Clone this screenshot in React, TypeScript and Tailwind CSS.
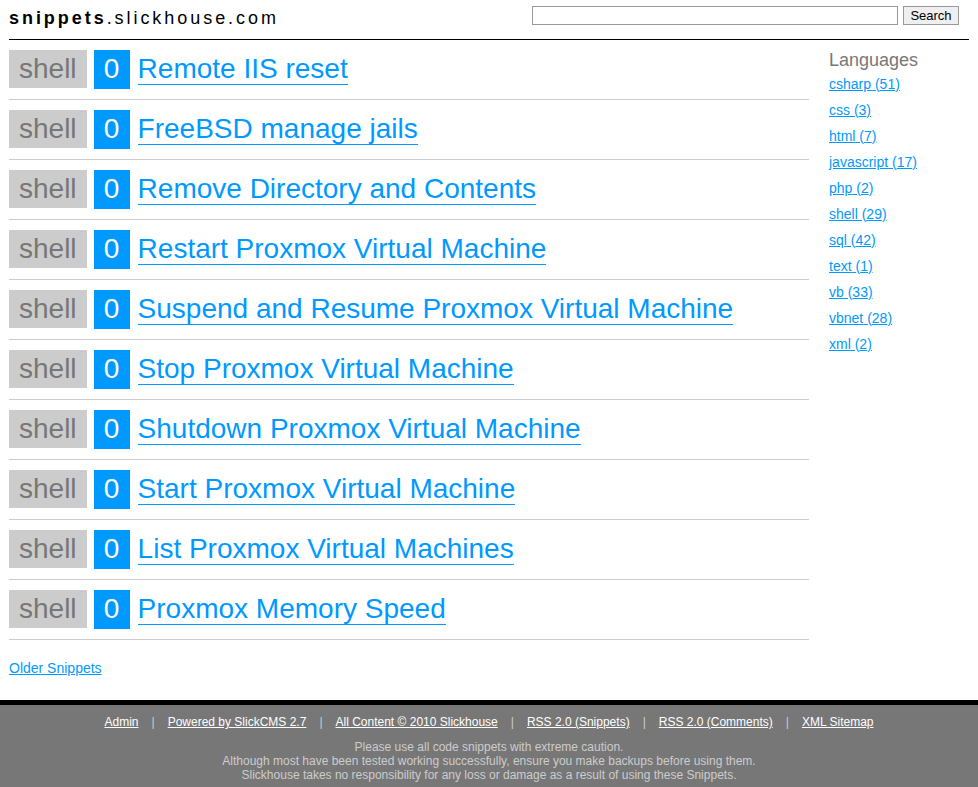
const SNIPPETS = [
  "Remote IIS reset",
  "FreeBSD manage jails",
  "Remove Directory and Contents",
  "Restart Proxmox Virtual Machine",
  "Suspend and Resume Proxmox Virtual Machine",
  "Stop Proxmox Virtual Machine",
  "Shutdown Proxmox Virtual Machine",
  "Start Proxmox Virtual Machine",
  "List Proxmox Virtual Machines",
  "Proxmox Memory Speed",
];

const LANGUAGES = [
  ["csharp", 51],
  ["css", 3],
  ["html", 7],
  ["javascript", 17],
  ["php", 2],
  ["shell", 29],
  ["sql", 42],
  ["text", 1],
  ["vb", 33],
  ["vbnet", 28],
  ["xml", 2],
] as const;

const FOOTER_LINKS = [
  "Admin",
  "Powered by SlickCMS 2.7",
  "All Content © 2010 Slickhouse",
  "RSS 2.0 (Snippets)",
  "RSS 2.0 (Comments)",
  "XML Sitemap",
];

export default function App() {
  return (
    <div className="min-h-screen bg-white font-['Liberation_Sans',Arial,sans-serif] text-black">
      <div className="ml-[9px] w-[960px]">
        <header className="flex h-[40px] items-start justify-between border-b border-black">
          <h1 className="pt-[8px] text-[18px] leading-[20px] tracking-[2.95px]">
            <span className="font-bold">snippets</span>.slickhouse.com
          </h1>
          <form className="mr-[10px] mt-[6px] flex gap-[5px]">
            <input
              type="text"
              className="h-[19px] w-[366px] border border-[#999] bg-white px-1 text-[13px] outline-none"
            />
            <button
              type="button"
              className="h-[19px] w-[56px] border border-[#999] bg-[#efefef] text-[13px] leading-[17px] text-black"
            >
              Search
            </button>
          </form>
        </header>

        <div className="flex">
          <main className="w-[800px]">
            <ul>
              {SNIPPETS.map((title) => (
                <li
                  key={title}
                  className="flex items-start border-b border-[#ccc] py-[10px]"
                >
                  <span className="h-[38px] bg-[#ccc] px-[10px] text-[28px] leading-[37px] text-[#777]">
                    shell
                  </span>
                  <span className="ml-[7px] h-[39px] w-[36px] bg-[#0099ff] text-center text-[28px] leading-[37px] text-white">
                    0
                  </span>
                  <span className="ml-[8px] text-[28px] leading-[37px]">
                    <a
                      href="#"
                      className="border-b border-[#0099ff] text-[#0099ff]"
                    >
                      {title}
                    </a>
                  </span>
                </li>
              ))}
            </ul>
            <div className="mb-[24px] mt-[20px] text-[14px] leading-[16px]">
              <a href="#" className="text-[#0099ff] underline">
                Older Snippets
              </a>
            </div>
          </main>

          <aside className="ml-[20px] w-[140px] pt-[10px]">
            <h2 className="text-[18px] leading-[20px] text-[#777]">Languages</h2>
            <ul className="mt-[1px]">
              {LANGUAGES.map(([name, count]) => (
                <li key={name} className="text-[14px] leading-[26px]">
                  <a href="#" className="text-[#0099ff] underline">
                    {name} ({count})
                  </a>
                </li>
              ))}
            </ul>
          </aside>
        </div>
      </div>

      <footer className="border-t-[5px] border-black bg-[#777] pb-[5px] pt-[10px] text-center text-[12px] leading-[14px]">
        <p>
          {FOOTER_LINKS.map((label, i) => (
            <span key={label}>
              {i > 0 && <span className="px-[13px] text-[#ccc]">|</span>}
              <a href="#" className="text-white underline">
                {label}
              </a>
            </span>
          ))}
        </p>
        <p className="mt-[11px] text-[#ccc]">
          Please use all code snippets with extreme caution.
          <br />
          Although most have been tested working successfully, ensure you make
          backups before using them.
          <br />
          Slickhouse takes no responsibility for any loss or damage as a result
          of using these Snippets.
        </p>
      </footer>
    </div>
  );
}
